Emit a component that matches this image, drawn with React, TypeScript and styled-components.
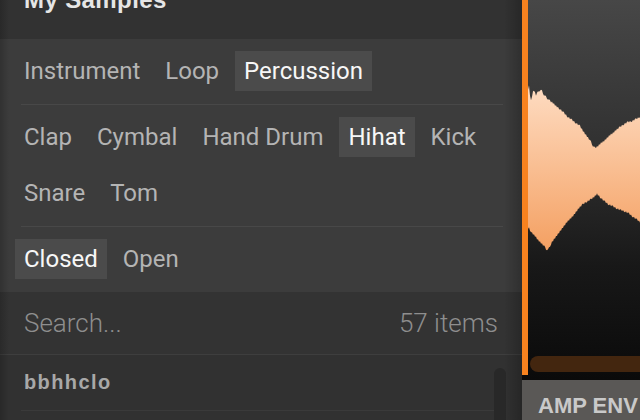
import React from "react";
import styled, {createGlobalStyle} from "styled-components";

const GlobalStyle = createGlobalStyle`
  html, body {
    margin: 0;
    padding: 0;
    background: #000;
  }
`;

const Screen = styled.div`
  display: flex;
  width: 640px;
  height: 420px;
  overflow: hidden;
  font-family: Roboto, "Liberation Sans", sans-serif;
`;

const Browser = styled.div`
  position: relative;
  width: 522px;
  flex-shrink: 0;
  display: flex;
  flex-direction: column;
  background: #313131;

  &::after {
    content: "";
    position: absolute;
    inset: 0;
    pointer-events: none;
    background:
      linear-gradient(to right, rgba(0, 0, 0, 0.18), rgba(0, 0, 0, 0) 9px),
      linear-gradient(to left, rgba(0, 0, 0, 0.22), rgba(0, 0, 0, 0) 18px);
  }
`;

const Header = styled.div`
  height: 39px;
  flex-shrink: 0;
  background: #323232;
  padding-left: 24px;
`;

const Title = styled.div`
  margin-top: -14px;
  font-family: "Liberation Sans", Arial, sans-serif;
  font-size: 24px;
  line-height: 28px;
  font-weight: 700;
  letter-spacing: 0.4px;
  color: #e6e6e6;
`;

const TagSection = styled.div`
  background: #3c3c3c;
  padding: 12px 20px 13px 0;
`;

const DividerSection = styled.div`
  background: #3c3c3c;
`;

const TagRows = styled.div`
  display: flex;
  flex-direction: column;
  gap: 16px;
  padding-left: 15px;
`;

const TagRow = styled.div`
  display: flex;
  gap: 7px;
`;

const Divider = styled.div`
  height: 1px;
  margin: 0 19px 0 21px;
  background: #484848;
`;

const Tag = styled.div<{ $active?: boolean }>`
  height: 40px;
  padding: 0 9px;
  display: flex;
  align-items: center;
  font-size: 24px;
  color: ${p => (p.$active ? "#f7f7f7" : "#b4b4b4")};
  background: ${p => (p.$active ? "#4b4b4b" : "transparent")};
`;

const SearchBar = styled.div`
  height: 62px;
  flex-shrink: 0;
  display: flex;
  align-items: center;
  justify-content: space-between;
  padding: 0 24px 0 24px;
  background: #333333;
  border-bottom: 1px solid #3e3e3e;
  font-size: 26px;
  font-weight: 300;
  color: #8e8e8e;
`;

const ListArea = styled.div`
  position: relative;
  flex: 1;
  background: #313131;
`;

const ListRow = styled.div`
  height: 55px;
  display: flex;
  align-items: center;
  margin: 0 19px 0 21px;
  padding-left: 3px;
  border-bottom: 1px solid #3a3a3a;
  font-family: "Liberation Sans", Arial, sans-serif;
  font-weight: 700;
  font-size: 20px;
  letter-spacing: 1.4px;
  color: #a8a8a8;
`;

const ScrollThumb = styled.div`
  position: absolute;
  left: 494px;
  top: 13px;
  width: 12px;
  height: 120px;
  border-radius: 6px;
  background: #282828;
`;

const Editor = styled.div`
  flex: 1;
  display: flex;
  flex-direction: column;
`;

const WaveArea = styled.div`
  height: 380px;
  display: flex;
  background: #0a0a0a;
`;

const PlayHead = styled.div`
  width: 6px;
  height: 375px;
  background: #f7821f;
`;

const Waveform = styled.div`
  flex: 1;
  display: flex;
  flex-direction: column;
  background: linear-gradient(to bottom, #474747 0%, #303030 40%, #181818 70%, #0a0a0a 100%);
`;

const WaveSvg = styled.svg`
  display: block;
  width: 112px;
  height: 352px;
`;

const ScrollPill = styled.div`
  height: 16px;
  margin: 4px 0 8px 2px;
  border-radius: 8px 0 0 8px;
  background: #43260f;
`;

const EnvPanel = styled.div`
  flex: 1;
  background: #5a5856;
  padding: 13px 0 0 16px;
  font-family: "Liberation Sans", Arial, sans-serif;
  font-weight: 700;
  font-size: 22px;
  color: #c9c9c9;
  white-space: nowrap;
`;

const TOP: [number, number][] = [
  [0, 89], [1, 86], [2, 95], [3, 101], [4, 96], [5, 92], [6, 90], [7, 93], [8, 95],
  [10, 92], [12, 90], [14, 91], [16, 95], [18, 97], [20, 99], [22, 101], [25, 103],
  [28, 106], [32, 109], [36, 113], [40, 117], [44, 120], [48, 123], [52, 126],
  [55, 131], [58, 135], [61, 139], [63, 142], [65, 146], [67, 148], [70, 146],
  [73, 143], [76, 141], [79, 138], [82, 135], [85, 133], [88, 130], [92, 127],
  [96, 124], [100, 122], [104, 121], [108, 119], [112, 117],
];

const BOTTOM: [number, number][] = [
  [112, 222], [108, 219], [104, 216], [100, 213], [96, 211], [92, 210],
  [88, 208], [84, 206], [80, 204], [76, 201], [72, 197], [69, 194], [66, 197],
  [62, 200], [58, 202], [54, 205], [51, 208], [48, 212], [45, 216], [42, 219],
  [39, 222], [36, 226], [33, 230], [30, 234], [27, 238], [24, 242], [22, 246],
  [20, 250], [18, 249], [16, 246], [13, 243], [10, 240], [7, 236], [4, 233],
  [2, 230], [1, 228], [0, 229],
];

function jagged(points: [number, number][]): string {
  const out: string[] = [];
  for (let i = 0; i < points.length - 1; i++) {
    const [x1, y1] = points[i];
    const [x2, y2] = points[i + 1];
    const steps = Math.max(1, Math.round(Math.abs(x2 - x1)));
    for (let s = 0; s < steps; s++) {
      const t = s / steps;
      const x = x1 + (x2 - x1) * t;
      const y = y1 + (y2 - y1) * t + ((i + s) % 2 === 0 ? 0.8 : -0.8);
      out.push(`${x.toFixed(1)},${y.toFixed(1)}`);
    }
  }
  const last = points[points.length - 1];
  out.push(`${last[0]},${last[1]}`);
  return out.join(" ");
}

const WAVE_POINTS = `${jagged(TOP)} ${jagged(BOTTOM)}`;

interface TagItem {
  label: string;
  active?: boolean;
}

const SECTIONS: TagItem[][][] = [
  [[{label: "Instrument"}, {label: "Loop"}, {label: "Percussion", active: true}]],
  [
    [{label: "Clap"}, {label: "Cymbal"}, {label: "Hand Drum"}, {label: "Hihat", active: true}, {label: "Kick"}],
    [{label: "Snare"}, {label: "Tom"}],
  ],
  [[{label: "Closed", active: true}, {label: "Open"}]],
];

export default function App(): JSX.Element {
  return (
    <Screen>
      <GlobalStyle />
      <Browser>
        <Header>
          <Title>My Samples</Title>
        </Header>
        {SECTIONS.map((section, si) => (
          <React.Fragment key={si}>
            {si > 0 && (
              <DividerSection>
                <Divider />
              </DividerSection>
            )}
            <TagSection>
              <TagRows>
                {section.map((row, ri) => (
                  <TagRow key={ri}>
                    {row.map(tag => (
                      <Tag key={tag.label} $active={tag.active}>{tag.label}</Tag>
                    ))}
                  </TagRow>
                ))}
              </TagRows>
            </TagSection>
          </React.Fragment>
        ))}
        <SearchBar>
          <span>Search...</span>
          <span>57 items</span>
        </SearchBar>
        <ListArea>
          <ListRow>bbhhclo</ListRow>
          <ScrollThumb />
        </ListArea>
      </Browser>
      <Editor>
        <WaveArea>
          <PlayHead />
          <Waveform>
            <WaveSvg viewBox="0 0 112 352">
              <defs>
                <linearGradient id="waveFill" x1="0" y1="0" x2="0" y2="1">
                  <stop offset="0" stopColor="#fedcc2" />
                  <stop offset="1" stopColor="#f4a062" />
                </linearGradient>
              </defs>
              <polygon points={WAVE_POINTS} fill="url(#waveFill)" />
            </WaveSvg>
            <ScrollPill />
          </Waveform>
        </WaveArea>
        <EnvPanel>AMP ENV</EnvPanel>
      </Editor>
    </Screen>
  );
}
